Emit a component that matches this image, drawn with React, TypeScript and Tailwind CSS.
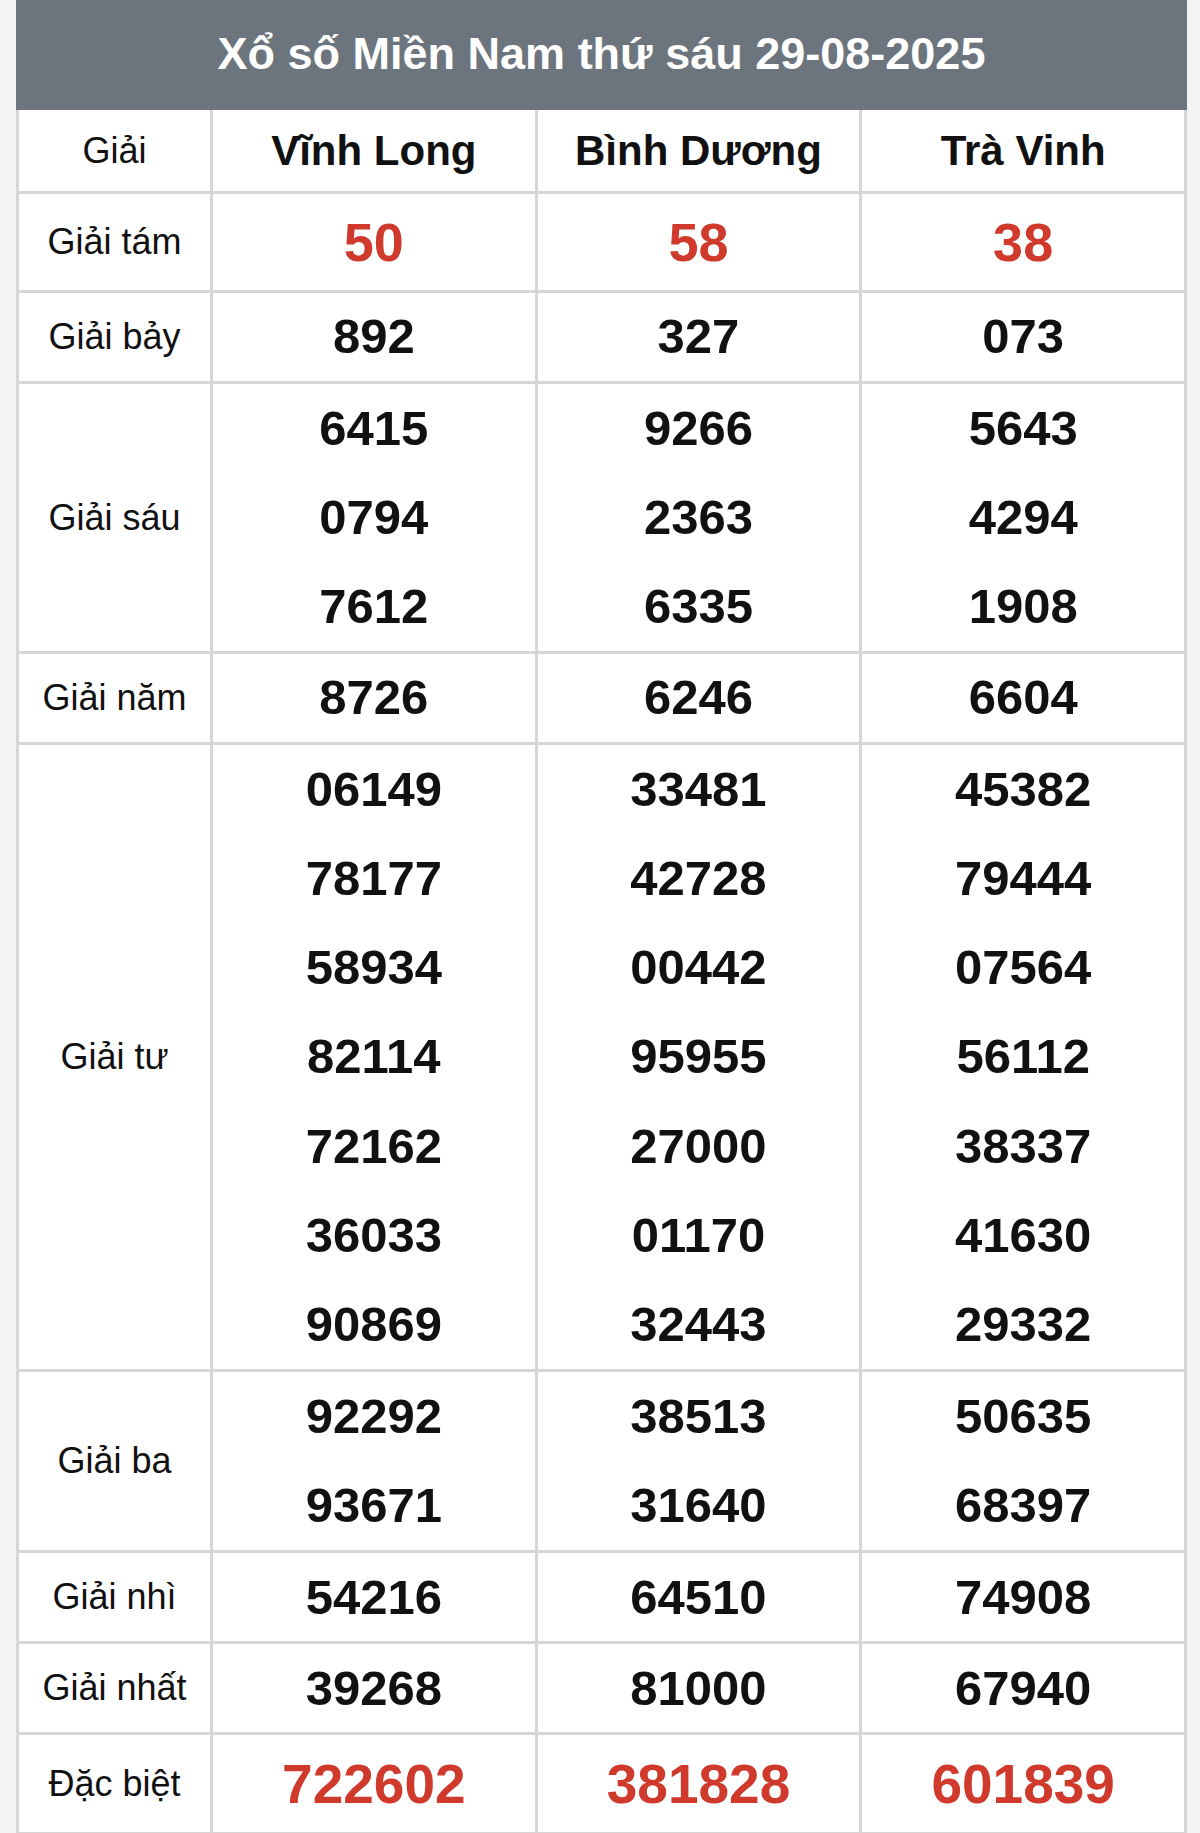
import React from 'react'

type Row = {
  label: string
  h: string
  big?: 'tam' | 'db'
  values: [string[], string[], string[]]
}

const rows: Row[] = [
  { label: 'Giải tám', h: 'h-[96px]', big: 'tam', values: [['50'], ['58'], ['38']] },
  { label: 'Giải bảy', h: 'h-[88px]', values: [['892'], ['327'], ['073']] },
  {
    label: 'Giải sáu', h: 'h-[89px]',
    values: [['6415', '0794', '7612'], ['9266', '2363', '6335'], ['5643', '4294', '1908']],
  },
  { label: 'Giải năm', h: 'h-[88px]', values: [['8726'], ['6246'], ['6604']] },
  {
    label: 'Giải tư', h: 'h-[89.2px]',
    values: [
      ['06149', '78177', '58934', '82114', '72162', '36033', '90869'],
      ['33481', '42728', '00442', '95955', '27000', '01170', '32443'],
      ['45382', '79444', '07564', '56112', '38337', '41630', '29332'],
    ],
  },
  { label: 'Giải ba', h: 'h-[89px]', values: [['92292', '93671'], ['38513', '31640'], ['50635', '68397']] },
  { label: 'Giải nhì', h: 'h-[88px]', values: [['54216'], ['64510'], ['74908']] },
  { label: 'Giải nhất', h: 'h-[88px]', values: [['39268'], ['81000'], ['67940']] },
  { label: 'Đặc biệt', h: 'h-[97px]', big: 'db', values: [['722602'], ['381828'], ['601839']] },
]

const provinces = ['Vĩnh Long', 'Bình Dương', 'Trà Vinh']

export default function App() {
  return (
    <div className="min-h-screen bg-[#f4f4f4] pl-[16px] pr-[13px]" style={{ fontFamily: '"Liberation Sans", Arial, sans-serif' }}>
      <div className="bg-white">
        <div className="h-[110px] pb-[4px] bg-[#6c757d] flex items-center justify-center">
          <h1 className="text-[45px] font-bold text-white leading-none">Xổ số Miền Nam thứ sáu 29-08-2025</h1>
        </div>

        <table className="w-full border-collapse table-fixed text-[#111]">
          <colgroup>
            <col className="w-[194px]" />
            <col />
            <col />
            <col />
          </colgroup>
          <thead>
            <tr>
              <th className="border-[3px] border-[#d6d6d6] border-t-0 p-0 font-normal">
                <div className="h-[81px] flex items-center justify-center text-[36px]">Giải</div>
              </th>
              {provinces.map(p => (
                <th key={p} className="border-[3px] border-[#d6d6d6] border-t-0 p-0">
                  <div className="h-[81px] flex items-center justify-center text-[42px] font-bold">{p}</div>
                </th>
              ))}
            </tr>
          </thead>
          <tbody>
            {rows.map(r => (
              <tr key={r.label}>
                <td className="border-[3px] border-[#d6d6d6] p-0 text-center align-middle text-[36px]">{r.label}</td>
                {r.values.map((vals, i) => (
                  <td key={i} className="border-[3px] border-[#d6d6d6] p-0">
                    {vals.map((v, j) => (
                      <div
                        key={j}
                        className={`${r.h} flex items-center justify-center font-bold ${
                          r.big === 'tam'
                            ? 'text-[54px] text-[#cf3a2c]'
                            : r.big === 'db'
                            ? 'text-[55px] text-[#cf3a2c]'
                            : 'text-[49px] text-[#111]'
                        }`}
                      >
                        {v}
                      </div>
                    ))}
                  </td>
                ))}
              </tr>
            ))}
          </tbody>
        </table>
      </div>
    </div>
  )
}
